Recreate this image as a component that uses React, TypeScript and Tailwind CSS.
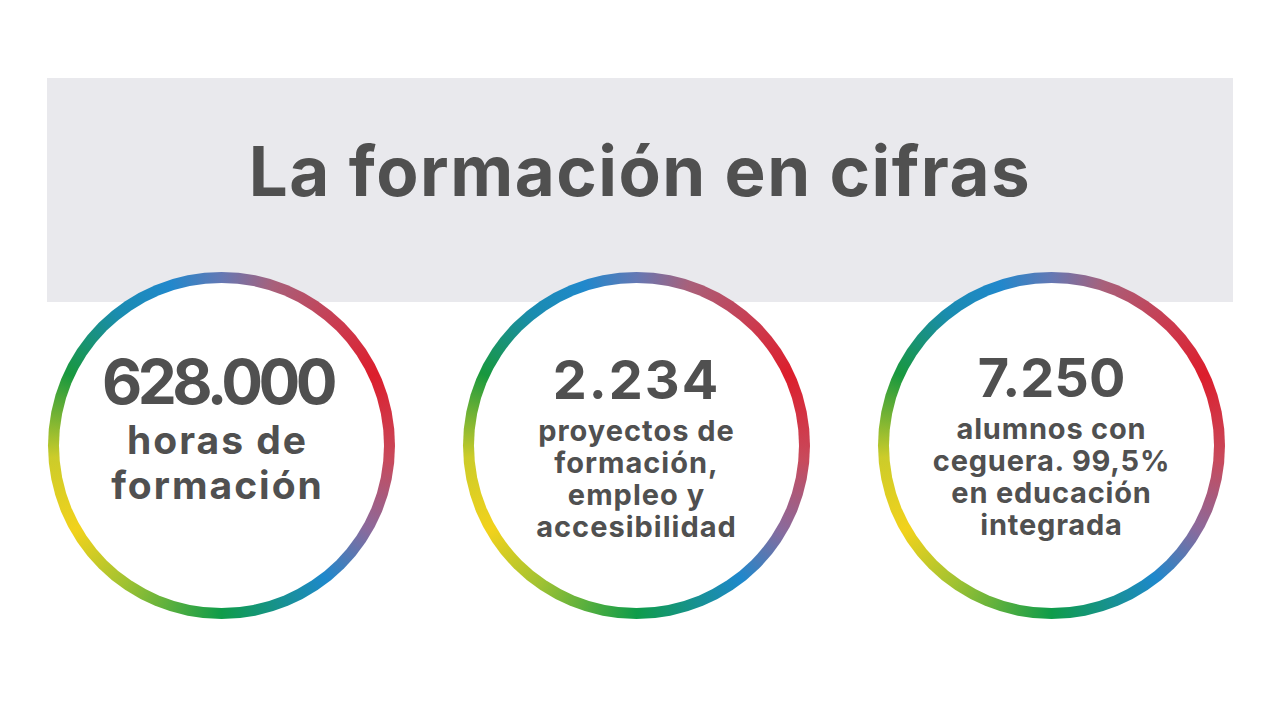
type Stat = {
  value: string;
  boxClass: string;
  valueClass: string;
  lines: string[];
  textClass: string;
};

const stats: Stat[] = [
  {
    value: "628.000",
    boxClass: "pt-[68px] pr-[8px]",
    valueClass: "text-[62px] leading-[62px] tracking-[-4.5px]",
    lines: ["horas de", "formación"],
    textClass: "text-[39px] leading-[45px] tracking-[2px] mt-[4px]",
  },
  {
    value: "2.234",
    boxClass: "pt-[69px]",
    valueClass: "text-[54px] leading-[56px] tracking-[2px]",
    lines: ["proyectos de", "formación,", "empleo y", "accesibilidad"],
    textClass: "text-[29px] leading-[32px] tracking-[1px] mt-[7px]",
  },
  {
    value: "7.250",
    boxClass: "pt-[67px]",
    valueClass: "text-[54px] leading-[56px] tracking-[0px]",
    lines: ["alumnos con", "ceguera. 99,5%", "en educación", "integrada"],
    textClass: "text-[29px] leading-[32px] tracking-[0.8px] mt-[7px]",
  },
];

function StatCircle({ stat }: { stat: Stat }) {
  return (
    <div className="w-[347px] h-[347px] shrink-0 rounded-full p-[11px] bg-[image:conic-gradient(#6478b4_0deg,#a8607a_18deg,#cc3a4e_45deg,#dc1e2c_65deg,#c84a5c_95deg,#8a6a9c_120deg,#1e88cc_142deg,#0f9c4a_180deg,#a0c232_215deg,#f2d21c_240deg,#cccc2a_266deg,#18983e_295deg,#1a8cb0_322deg,#2088cc_342deg,#6478b4_360deg)]">
      <div
        className={`w-full h-full rounded-full bg-white flex flex-col items-center text-[#505050] font-bold text-center ${stat.boxClass}`}
      >
        <div className={stat.valueClass}>{stat.value}</div>
        <div className={stat.textClass}>
          {stat.lines.map((line) => (
            <div key={line}>{line}</div>
          ))}
        </div>
      </div>
    </div>
  );
}

export default function App() {
  return (
    <div className="w-[1280px] h-[720px] bg-white font-['Inter',sans-serif] overflow-hidden">
      <div className="pt-[78px] px-[47px]">
        <div className="h-[224px] bg-[#e9e9ed] flex justify-center pt-[53px]">
          <h1 className="text-[69px] leading-[80px] font-bold text-[#505050] tracking-[1.5px]">
            La formación en cifras
          </h1>
        </div>
      </div>
      <div className="-mt-[30px] pl-[48px] flex gap-[68px]">
        {stats.map((stat) => (
          <StatCircle key={stat.value} stat={stat} />
        ))}
      </div>
    </div>
  );
}
